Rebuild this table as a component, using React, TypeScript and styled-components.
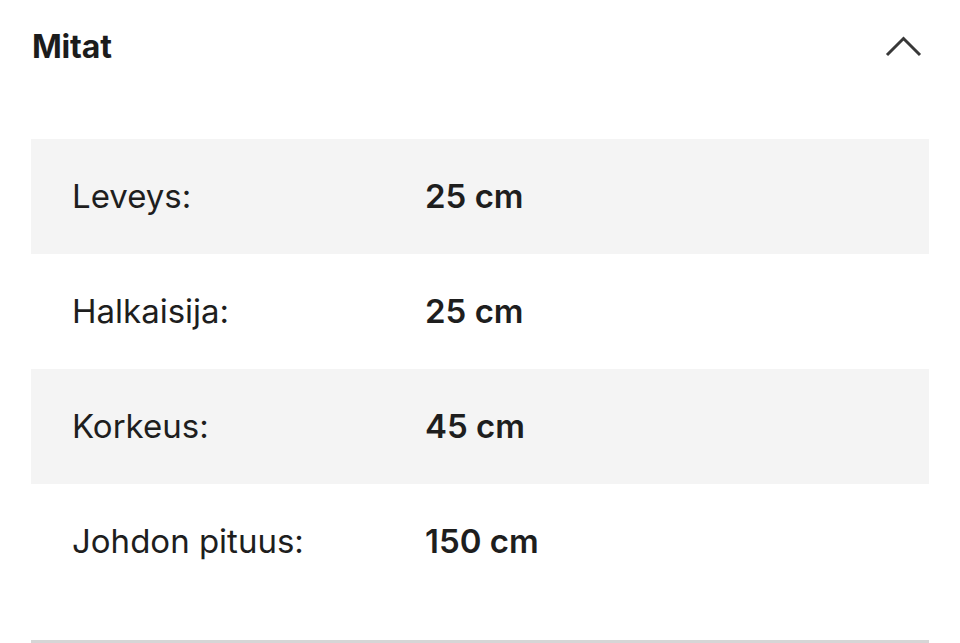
import React from "react";
import styled, { createGlobalStyle } from "styled-components";

const Global = createGlobalStyle`
  html, body { margin: 0; padding: 0; background: #ffffff; }
  body { font-family: "Inter", "Liberation Sans", sans-serif; color: #1c1c1c; }
`;

const Section = styled.section`
  width: 960px;
  height: 643px;
  box-sizing: border-box;
  padding: 0 31px;
  display: flex;
  flex-direction: column;
  overflow: hidden;
`;

const Header = styled.div`
  height: 93px;
  display: flex;
  align-items: center;
  justify-content: space-between;
`;

const Title = styled.h2`
  margin: 0;
  font-size: 32px;
  font-weight: 650;
  letter-spacing: -0.2px;
  color: #1c1c1c;
  padding-left: 1px;
`;

const Toggle = styled.button`
  border: 0;
  background: transparent;
  padding: 0;
  width: 44px;
  height: 30px;
  display: flex;
  align-items: center;
  justify-content: center;
  margin-right: 3px;
  cursor: pointer;
`;

const Table = styled.div`
  margin-top: 46px;
  display: flex;
  flex-direction: column;
`;

const Row = styled.div<{ $shaded: boolean }>`
  height: 115px;
  display: grid;
  grid-template-columns: 353px 1fr;
  align-items: center;
  padding-left: 41px;
  padding-bottom: 2px;
  box-sizing: border-box;
  background: ${(p) => (p.$shaded ? "#f4f4f4" : "#ffffff")};
`;

const Label = styled.span`
  font-size: 33px;
  font-weight: 400;
  color: #1e1e1e;
`;

const Value = styled.span`
  font-size: 33px;
  font-weight: 600;
  color: #1e1e1e;
`;

const Divider = styled.div`
  margin-top: auto;
  height: 3px;
  background: #d6d6d6;
`;

const rows = [
  ["Leveys:", "25 cm"],
  ["Halkaisija:", "25 cm"],
  ["Korkeus:", "45 cm"],
  ["Johdon pituus:", "150 cm"],
];

export default function App() {
  return (
    <>
      <Global />
      <Section>
        <Header>
          <Title>Mitat</Title>
          <Toggle aria-label="Sulje">
            <svg width="40" height="24" viewBox="0 0 40 24" fill="none">
              <polyline
                points="3,20 19.5,3.5 36,20"
                stroke="#383838"
                strokeWidth="3"
                strokeLinecap="butt"
                strokeLinejoin="miter"
              />
            </svg>
          </Toggle>
        </Header>
        <Table>
          {rows.map(([l, v], i) => (
            <Row key={l} $shaded={i % 2 === 0}>
              <Label>{l}</Label>
              <Value>{v}</Value>
            </Row>
          ))}
        </Table>
        <Divider />
      </Section>
    </>
  );
}
